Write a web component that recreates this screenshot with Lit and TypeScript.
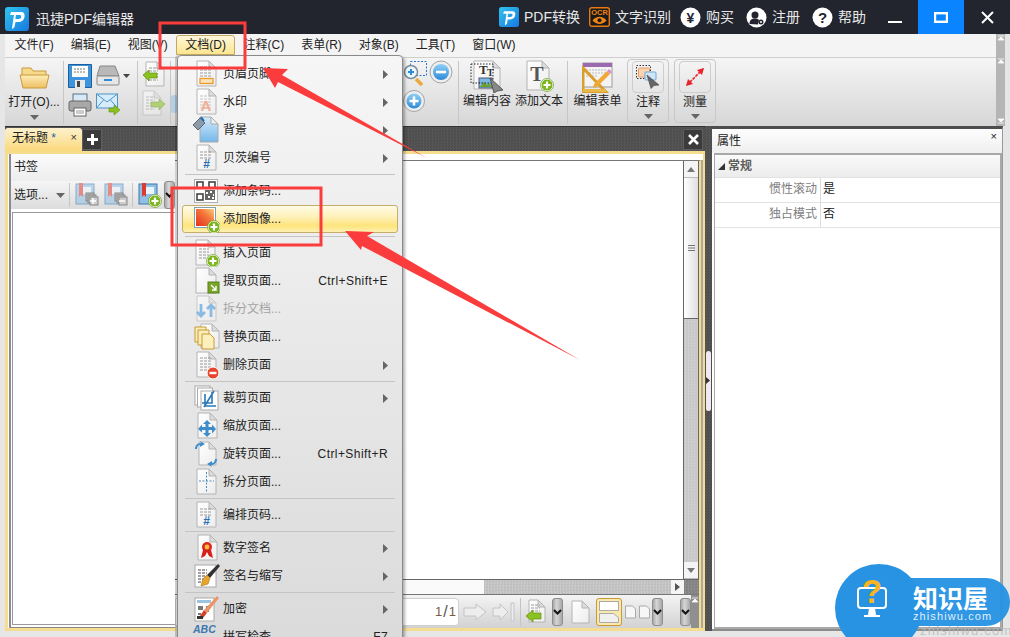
import { LitElement, html, css, svg } from "lit";
import { customElement } from "lit/decorators.js";

const pg = (x = 5, y = 1, w = 19, h = 25) => svg`<path d="M${x} ${y}h${w - 7}l7 7v${h - 7}h${-w}z" fill="url(#pg)" stroke="#b4b4b4"/><path d="M${x + w - 7} ${y}v7h7z" fill="#dcdcdc" stroke="#b4b4b4"/>`;
const lines = (x: number, y: number, n: number, w = 10, c = "#9a9a9a") =>
  Array.from({ length: n }, (_, i) => svg`<path d="M${x} ${y + i * 3}h${w}" stroke="${c}" stroke-dasharray="3 1" fill="none"/>`);
const plus = (cx: number, cy: number, r = 6) => svg`<circle cx="${cx}" cy="${cy}" r="${r}" fill="#7cb51e" stroke="#fff" stroke-width="1"/><circle cx="${cx}" cy="${cy}" r="${r + 0.5}" fill="none" stroke="#6a9c1a" stroke-width=".7"/><path d="M${cx - r + 2.5} ${cy}h${2 * r - 5}M${cx} ${cy - r + 2.5}v${2 * r - 5}" stroke="#fff" stroke-width="2.2"/>`;
const minus = (cx: number, cy: number, r = 6) => svg`<circle cx="${cx}" cy="${cy}" r="${r}" fill="#e8472e" stroke="#fff"/><path d="M${cx - r + 2.5} ${cy}h${2 * r - 5}" stroke="#fff" stroke-width="2.4"/>`;
const hash = (x: number, y: number) => svg`<text x="${x}" y="${y}" font-family="Liberation Sans" font-weight="700" font-size="12" fill="#2a6fb5" text-anchor="middle">#</text>`;
const icon = (c: unknown, w = 28, h = 28) => html`<svg width="${w}" height="${h}" viewBox="0 0 ${w} ${h}">${c}</svg>`;

const ICONS: Record<string, unknown> = {
  header: icon(svg`${pg()}${lines(8, 7, 4, 11)}<rect x="8" y="18.5" width="13" height="5" fill="#fbe3b8" stroke="#ee9a2c" stroke-width="1.3"/>`),
  water: icon(svg`${pg()}${lines(8, 8, 5, 11, "#c4c4c4")}<text x="14" y="23" text-anchor="middle" font-family="Liberation Sans" font-weight="700" font-size="15" fill="#f2ad92">A</text>`),
  bg: icon(svg`<path d="M8 1h11l7 7v18H8z" fill="url(#sky)" stroke="#aaa"/><path d="M19 1v7h7z" fill="#eee" stroke="#aaa"/><path d="M1 9l7-7 5 5-7 7z" fill="#8d9aa8" stroke="#5c6874"/><path d="M9 1l3 4" stroke="#1f6fc0" stroke-width="2"/>`),
  bates: icon(svg`${pg()}${lines(8, 8, 3, 11)}${hash(14.5, 24)}`),
  qr: icon(svg`<rect x="2.5" y="2.5" width="23" height="23" fill="#fff" stroke="#b0b0b0"/><g fill="none" stroke="#444" stroke-width="1.6"><rect x="5" y="5" width="6" height="6"/><rect x="5" y="17" width="6" height="6"/><rect x="17" y="5" width="6" height="6"/></g><path d="M13 13h10v10H13z" fill="#666"/><path d="M14 15h2v2h-2zM18 14h2v2h-2zM21 17h1v2h-1zM16 19h2v2h-2zM20 20h2v2h-2zM13 6h2v2h-2zM13 10h2v1h-2zM6 13h3v2H6z" fill="#fff"/>`),
  image: icon(svg`<rect x="2.5" y="2.5" width="21" height="20" fill="#fff" stroke="#7f9fb5"/><rect x="4" y="4" width="18" height="17" fill="url(#sun)"/>${plus(22, 22, 6)}`),
  insert: icon(svg`${pg(4)}${lines(7, 7, 5, 10)}${plus(21, 22, 6)}`),
  extract: icon(svg`${pg(4, 1, 20, 25)}<rect x="16" y="15" width="11" height="11" fill="#7aa528" stroke="#55801a"/><path d="M19 18l5 5m0-4v4h-4" stroke="#fff" stroke-width="1.4" fill="none"/>`),
  split: icon(svg`<g opacity=".6">${pg()}<path d="M9 9v12m-4-4l4 4 4-4M19 22V10m-4 4l4-4 4 4" stroke="#4f9ade" stroke-width="2.8" fill="none"/></g>`),
  replace: icon(svg`${pg(9, 1, 18, 24)}<path d="M3 4h11v15H3z" fill="#fbedb8" stroke="#c79a35"/><path d="M6 7h11v15H6z" fill="#fbedb8" stroke="#c79a35"/><path d="M10 11h8l4 4v11H10z" fill="#fdf0bd" stroke="#c79a35"/>`),
  del: icon(svg`${pg()}${lines(8, 7, 5, 11)}${minus(21, 22, 6)}`),
  crop: icon(svg`<rect x="3" y="2" width="15" height="19" fill="#fff" stroke="#aaa"/><rect x="5.500" y="4" width="15" height="19" fill="#fff" stroke="#aaa"/><rect x="9" y="7" width="17" height="19" fill="#fff" stroke="#aaa"/><path d="M13 10v12h11M10 19h10V8m2-1L12 23" stroke="#2a78bb" stroke-width="1.6" fill="none"/>`),
  scale: icon(svg`${pg(6)}<path d="M15 8l4 4h-2.500v3H20v-2.500l4 4.500-4 4.500V18h-3.500v3H19l-4 4-4-4h2.500v-3H10v2.500L6 17l4-4.500V15h3.500v-3H11z" fill="#3f8ccb"/>`),
  rotate: icon(svg`${pg(7, 2, 17, 23)}<path d="M3 9c0-4 3-6 6-6l-1-2 5 3-5 3V5c-2 0-3 2-3 4zM25 19c0 4-3 6-6 6l1 2-5-3 5-3v2c2 0 3-2 3-4z" fill="#3f8ccb"/>`),
  splitpage: icon(svg`${pg()}<path d="M14.500 4v21M7 13h15" stroke="#4b88bb" stroke-dasharray="2 1.500" fill="none"/>`),
  number: icon(svg`${pg()}${lines(8, 8, 3, 11)}${hash(14.5, 24)}`),
  sign: icon(svg`${pg(6)}<circle cx="15" cy="13" r="5" fill="#e2261c"/><circle cx="15" cy="13" r="2.4" fill="#f7c243"/><path d="M11 16l-2 8 4-2 2-4 2 4 4 2-2-8z" fill="#d4201a"/>`),
  initials: icon(svg`<rect x="3" y="3" width="21" height="22" fill="#fff" stroke="#aaa"/>${lines(6, 8, 5, 9, "#444")}<path d="M26 2l2 2-10 12-3-3z" fill="#333"/><path d="M15 13l3 3-2 6-7 2 2-7z" fill="#e7a52c" stroke="#a87514" stroke-width=".6"/>`),
  lock: icon(svg`<rect x="3" y="3" width="19" height="23" fill="#fff" stroke="#aaa"/><rect x="5" y="5" width="14" height="3" fill="#9cc3e0"/><path d="M6 11h5v4H6zM6 18h3v2H6zM14 11h5v2h-5zM14 15h3v2h-3z" fill="#777"/><path d="M27 3l-2-2-13 14 3 3z" fill="#ec9468"/><path d="M12 15l-4 6 3 2 4-5z" fill="#d8402a"/><path d="M5 21h6v3H5z" fill="#333"/>`),
  spell: icon(svg`<text x="1" y="10" font-family="Liberation Sans" font-style="italic" font-weight="700" font-size="10.500" fill="#3d78b0">ABC</text><path d="M13 22l4 4 7-8" stroke="#7cb51e" stroke-width="3" fill="none"/>`),
};

type Item = { t: string; i: string; sub?: boolean; key?: string; off?: boolean; on?: boolean } | { sep: true; wide?: boolean };
const MENU: Item[] = [
  { t: "页眉页脚", i: "header", sub: true },
  { t: "水印", i: "water", sub: true },
  { t: "背景", i: "bg", sub: true },
  { t: "贝茨编号", i: "bates", sub: true },
  { sep: true },
  { t: "添加条码...", i: "qr" },
  { t: "添加图像...", i: "image", on: true },
  { sep: true, wide: true },
  { t: "插入页面", i: "insert" },
  { t: "提取页面...", i: "extract", key: "Ctrl+Shift+E" },
  { t: "拆分文档...", i: "split", off: true },
  { t: "替换页面...", i: "replace" },
  { t: "删除页面", i: "del", sub: true },
  { sep: true },
  { t: "裁剪页面", i: "crop", sub: true },
  { t: "缩放页面...", i: "scale" },
  { t: "旋转页面...", i: "rotate", key: "Ctrl+Shift+R" },
  { t: "拆分页面...", i: "splitpage" },
  { sep: true },
  { t: "编排页码...", i: "number" },
  { sep: true },
  { t: "数字签名", i: "sign", sub: true },
  { t: "签名与缩写", i: "initials", sub: true },
  { sep: true },
  { t: "加密", i: "lock", sub: true },
  { t: "拼写检查", i: "spell", key: "F7" },
];

const logo = (s: number) => html`<svg width="${s}" height="${s}" viewBox="0 0 24 24"><rect width="24" height="24" rx="3" fill="url(#logo)"/><path d="M7 21l2-13h-4l1-3h10c3 0 4 2 3.500 5-.5 3-3 5-6 5h-3l-1 5-2 2zM11 8l-.7 4h3.200c1.500 0 2.500-.8 2.700-2 .2-1.300-.4-2-1.700-2z" fill="#fff"/></svg>`;
const caret = html`<svg class="caret" width="9" height="5" viewBox="0 0 9 5"><path d="M0 0h9L4.500 5z" fill="#666"/></svg>`;
const chev = html`<span class="dd"><svg width="9" height="6" viewBox="0 0 9 6"><path d="M1 1l3.500 3.500L8 1" fill="none" stroke="#111" stroke-width="2"/></svg></span>`;
const notch = (up: boolean) => html`<svg width="8" height="6" viewBox="0 0 8 6"><path d="${up ? "M1 5h6L4 2zM1 1h6" : "M1 1h6L4 4zM1 5h6"}" fill="#fff" stroke="#fff" stroke-width=".8"/></svg>`;
const book = (badge: unknown, dim = false) => html`<svg width="24" height="26" viewBox="0 0 24 26"><g opacity="${dim ? 0.55 : 1}"><rect x="1" y="2" width="18" height="20" fill="#8fbfe5" stroke="#3f79ad"/><rect x="7" y="5" width="9" height="7" fill="#eaf4fb"/><path d="M4 1h4v14l-2-2-2 2z" fill="#dc3c30"/></g>${badge}</svg>`;
const stack = (mark: string) => svg`<g stroke="#888" fill="#bbb"><rect x="11" y="11" width="8" height="8"/><rect x="13" y="13" width="8" height="8"/><rect x="15" y="15" width="8" height="8" fill="#ccc"/></g><path d="${mark}" stroke="#fff" stroke-width="1.500"/>`;

@customElement("app-root")
export class AppRoot extends LitElement {
  static styles = css`
    :host { display: block; width: 1010px; height: 637px; position: relative; overflow: hidden; background: #e6e6e6;
      font: 12px/1.2 "Liberation Sans", "Noto Sans CJK SC", sans-serif; color: #222; }
    svg { display: block; flex: none; }
    .defs { width: 0; height: 0; }
    .title { height: 34px; background: #22252e; display: flex; align-items: center; color: #e8e8e8; font-size: 14px; padding: 4px 0 0 5px; box-sizing: border-box; }
    .title .name { margin-left: 7px; }
    .links { margin-left: auto; display: grid; grid-template-columns: 90px 91px 66px 66px 54px; align-items: center; margin-top: -4px; margin-right: 6px; }
    .link { display: flex; align-items: center; gap: 5px; white-space: nowrap; }
    .win { display: flex; height: 34px; margin-top: -4px; }
    .win span { width: 46px; display: flex; align-items: center; justify-content: center; }
    .win .max { background: #0a84ff; }
    .ribbon { display: flex; padding: 0 5px; height: 92px; }
    .ribbon-main { flex: 1; display: flex; flex-direction: column; min-width: 0; }
    .strip { width: 9px; background: #b5b5b5; display: flex; flex-direction: column; justify-content: space-between; align-items: center; padding: 1px 0 2px; box-sizing: border-box; }
    .strip .mid { margin-top: -38px; }
    .menubar { height: 24px; display: flex; align-items: center; padding: 0 0 1px 1px; box-sizing: border-box; background: #f4f4f4; border-bottom: 1px solid #cfcfcf; }
    .mi { padding: 2px 8.500px; white-space: nowrap; border: 1px solid transparent; border-width: 1px 0; }
    .mi.open { background: linear-gradient(#fff8dc, #fce58f); border: 1px solid #c4a860; border-radius: 3px 3px 0 0; padding: 2px 8px; }
    .toolbar { height: 68px; display: flex; background: linear-gradient(#f5f5f5, #d6d6d6); }
    .tsep { width: 1px; background: #c6c6c6; margin: 3px 0 2px; flex: none; }
    .open-btn { width: 58px; display: flex; flex-direction: column; align-items: center; }
    .open-btn svg:first-child { margin-top: 6px; }
    .open-btn span { margin-top: 6px; }
    .open-btn .caret, .big .caret, .tool .caret { margin-top: 6px; }
    .g2 { width: 73px; display: grid; grid-template-columns: 28px 36px; grid-auto-rows: 29px; padding: 3px 0 0 4px; box-sizing: border-box; }
    .g2 div { display: flex; align-items: center; gap: 3px; }
    .g3 { width: 32px; padding: 3px 0 0 4px; box-sizing: border-box; display: grid; grid-auto-rows: 29px; }
    .g4 { width: 287px; display: flex; justify-content: space-between; align-items: flex-start; }
    .blob { margin-top: 35px; }
    .tool { display: flex; flex-direction: column; align-items: center; width: 52px; }
    .tool .ic { height: 35px; display: flex; align-items: flex-end; }
    .tool span { padding-top: 1px; white-space: nowrap; }
    .g5 { width: 108px; display: flex; padding: 0 0 0 2px; box-sizing: border-box; }
    .g6 { width: 59px; display: flex; justify-content: center; }
    .big { width: 42px; height: 64px; margin-top: 1px; border: 1px solid #c8c8c8; border-radius: 4px; box-sizing: border-box; display: flex; flex-direction: column; align-items: center; }
    .big.second { margin-left: 5px; }
    .big .box { width: 32px; height: 32px; margin-top: 1px; border: 1px solid #cdcdcd; border-radius: 4px; box-sizing: border-box; display: flex; align-items: center; justify-content: center; }
    .big span { margin-top: 2px; }
    .big .caret { margin-top: 5px; }
    .work { height: 511px; display: flex; padding: 0 5px 6px; box-sizing: border-box; }
    .main { width: 700px; display: flex; flex-direction: column; }
    .tex { background: repeating-conic-gradient(#565656 0 25%, #4c4c4c 0 50%) 0 0 / 3px 3px; }
    .tabs { height: 25px; display: flex; align-items: flex-end; border-top: 1px solid #333; box-sizing: border-box; }
    .tab { width: 77px; height: 23px; background: linear-gradient(#fdf1cd, #fbd97c); border-radius: 3px 3px 0 0; display: flex; justify-content: space-between; padding: 3px 5px 0 7px; box-sizing: border-box; }
    .tab .star { color: #2a5ea8; }
    .tab .x { font-size: 11px; color: #333; }
    .tbtn { width: 20px; height: 21px; background: #3b3b3b; display: flex; align-items: center; justify-content: center; margin-bottom: 1px; border: 1px solid #5e5e5e; box-sizing: border-box; }
    .tbtn.end { margin-left: auto; margin-right: 2px; }
    .frame { flex: 1; display: flex; min-height: 0; border: solid #f5dc8f; border-width: 3px 2px 3px 3px; background: #fff; }
    .left { width: 166px; margin-left: 1px; border: solid #8a8a8a; border-width: 0 0 1px 2px; display: flex; flex-direction: column; flex: none; box-sizing: border-box; }
    .lhead { height: 27px; display: flex; align-items: center; padding: 0 0 0 3px; background: linear-gradient(#fbfbfb, #ededed); }
    .ltool { height: 28px; display: flex; align-items: center; padding-left: 3px; background: linear-gradient(#f5f5f5, #dcdcdc); flex: none; white-space: nowrap; }
    .ltool .caret { margin-left: 8px; }
    .ltool .tsep { height: 24px; margin: 0 5px 0 4px; }
    .ltool svg + svg { margin-left: 5px; }
    .ltool .dd { margin-left: 2px; }
    .dd { width: 11px; height: 28px; border: 1px solid #8d8d8d; border-radius: 3px; background: linear-gradient(90deg, #a8a8a8, #d6d6d6 40%, #a8a8a8); display: flex; align-items: center; justify-content: center; box-sizing: border-box; flex: none; }
    .lbody { flex: 1; margin: 3px 0 2px 1px; border: 1px solid #999; border-right: 0; background: #fff; }
    .doc { flex: 1; min-width: 0; margin-top: 6px; border-top: 1px solid #777; border-right: 2px solid #f5dc8f; display: flex; flex-direction: column; box-shadow: 2px 0 0 #a8a8a8; margin-right: 2px; }
    .docmain { flex: 1; display: flex; min-height: 0; }
    .canvas { flex: 1; background: #fff; border-right: 1px solid #666; }
    .vs { width: 14px; border-right: 1px solid #666; display: flex; flex-direction: column; background: #c9c9c9; }
    .vs .btn { height: 16px; background: #f4f4f4; display: flex; align-items: center; justify-content: center; flex: none; border-bottom: 1px solid #bbb; }
    .vs .thumb { height: 140px; background: linear-gradient(90deg, #fff, #dedede); border-bottom: 1px solid #666; display: flex; align-items: center; justify-content: center; flex: none; }
    .vs .fill { flex: 1; background: repeating-conic-gradient(#cfcfcf 0 25%, #c5c5c5 0 50%) 0 0 / 3px 3px; }
    .hs { height: 14px; display: flex; border-top: 1px solid #666; border-bottom: 1px solid #777; }
    .hs .thumb { width: 309px; background: #fafafa; flex: none; }
    .hs .fill { flex: 1; background: repeating-conic-gradient(#c9c9c9 0 25%, #bdbdbd 0 50%) 0 0 / 3px 3px; }
    .hs .arrow { width: 13px; background: #f5f5f5; display: flex; align-items: center; justify-content: center; }
    .hs .tail { width: 15px; background: repeating-conic-gradient(#8d8d8d 0 25%, #7f7f7f 0 50%) 0 0 / 3px 3px; }
    .nav { height: 33px; display: flex; align-items: center; background: linear-gradient(#f4f4f4, #d2d2d2); flex: none; }
    .field { flex: 1; height: 28px; background: #fff; border: 1px solid #cfcfcf; border-radius: 0 4px 4px 0; box-sizing: border-box; display: flex; align-items: center; justify-content: flex-end; padding-right: 2px; font-size: 13px; color: #7a5a46; }
    .field b { font-weight: 400; color: #555; font-size: 16px; margin: 0 1px; }
    .m2 { margin-left: 2px; } .m3 { margin-left: 3px; } .m4 { margin-left: 4px; } .m5 { margin-left: 5px; } .m6 { margin-left: 6px; } .m8 { margin-left: 8px; } .m17 { margin-left: 17px; }
    .nsep { width: 1px; height: 28px; background: #c4c4c4; }
    .hl { width: 26px; height: 28px; border: 1px solid #c79a35; border-radius: 3px; background: #fbe8ac; box-sizing: border-box; display: flex; align-items: center; justify-content: center; }
    .graybar { width: 8px; align-self: stretch; background: #8f8f8f; display: flex; justify-content: center; padding-top: 2px; box-sizing: border-box; }
    .split { width: 7px; display: flex; align-items: center; justify-content: center; padding-top: 4px; box-sizing: border-box; }
    .handle { width: 5px; height: 60px; background: #eeeaf0; border-radius: 3px; display: flex; align-items: center; }
    .props-wrap { width: 291px; border-top: 3px solid #4d4d4d; display: flex; flex-direction: column; background: #fff; border-right: 1px solid #999; border-bottom: 2px solid #8c8c8c; box-sizing: border-box; box-shadow: 2px 0 0 #e6e6e6; }
    .phead { height: 24px; flex: none; display: flex; justify-content: space-between; align-items: center; padding: 0 5px; background: linear-gradient(#fdfdfd, #efefef); }
    .phead .x { font-size: 11px; margin-top: -8px; }
    .ptable { flex: 1; margin: 0 0 0 2px; border: 1px solid #a8a8a8; border-width: 2px 2px 2px 1px; }
    .pgroup { height: 22px; display: flex; align-items: center; gap: 3px; padding-left: 3px; background: linear-gradient(#fafafa, #ececec); color: #5e5e5e; font-weight: 700; border-bottom: 1px solid #e2e2e2; }
    .prow { height: 25px; display: flex; border-bottom: 1px solid #e2e2e2; box-sizing: border-box; align-items: stretch; }
    .prow .k { width: 106px; text-align: right; padding: 4px 3px 0 0; box-sizing: border-box; color: #7d7d7d; border-right: 1px solid #dcdcdc; }
    .prow .v { padding: 4px 0 0 2px; }
    .menu { position: absolute; left: 177px; top: 55px; width: 226px; height: 600px; box-sizing: border-box; padding: 4px 4px; border: 1px solid #8a8a8a; border-radius: 4px; background: linear-gradient(#f6f6f6, #dadada); box-shadow: -2px 0 0 rgba(0, 0, 0, .18), 2px 2px 3px rgba(0, 0, 0, .3); }
    .row { height: 28px; display: flex; align-items: center; box-sizing: border-box; border: 1px solid transparent; border-radius: 3px; padding-right: 9px; }
    .row .ic { width: 28px; margin-left: 9px; flex: none; }
    .row .t { margin-left: 3px; flex: 1; white-space: nowrap; }
    .row .key { letter-spacing: .42px; }
    .row.on { background: linear-gradient(#fffbe6, #fff0b4 45%, #fde47c 75%, #fff0b0); border-color: #c6ad6c; }
    .row.off .t { color: #a4a4a4; }
    .sep { height: 5px; display: flex; align-items: center; padding: 0 3px; }
    .sep.wide { height: 6px; }
    .sep i { display: block; height: 1px; flex: 1; background: #c4c4c4; }
    .marks { position: absolute; inset: 0; pointer-events: none; }
    .badge { position: absolute; left: 835px; top: 564px; width: 175px; height: 73px; color: #fff; }
    .badge .pill { position: absolute; left: 30px; top: 14px; right: 0; height: 48px; background: #2893e3; border-radius: 0 24px 24px 0; opacity: .96; }
    .badge .disc { position: absolute; left: 0; top: 0; width: 88px; height: 88px; border-radius: 50%; background: #2893e3; }
    .badge .disc svg { margin: 11px 0 0 20px; }
    .badge .zh { position: absolute; left: 78px; top: 21px; font: 700 25px/24px "Noto Sans CJK SC", sans-serif; white-space: nowrap; }
    .badge .en { position: absolute; left: 78px; top: 46px; font: 11px/13px "Liberation Sans", sans-serif; letter-spacing: 1.1px; opacity: .85; white-space: nowrap; }
    .ghost { position: absolute; left: 920px; top: 624px; font: 13px/13px "Liberation Sans", sans-serif; letter-spacing: 1.200px; color: #b8b8b8; white-space: nowrap; opacity: .8; }
  `;

  render() {
    return html`
      <svg class="defs"><defs>
        <linearGradient id="pg" x1="0" y1="0" x2="1" y2="1"><stop offset="0" stop-color="#fff"/><stop offset="1" stop-color="#ededed"/></linearGradient>
        <linearGradient id="sky" x1="0" y1="0" x2="0" y2="1"><stop offset="0" stop-color="#d5ebfb"/><stop offset="1" stop-color="#74b7ea"/></linearGradient>
        <linearGradient id="sun" x1="0" y1="1" x2="1" y2="0"><stop offset="0" stop-color="#e5301f"/><stop offset=".6" stop-color="#f4793a"/><stop offset="1" stop-color="#fbd07c"/></linearGradient>
        <linearGradient id="logo" x1="0" y1="0" x2="1" y2="1"><stop offset="0" stop-color="#30c4ee"/><stop offset="1" stop-color="#1778e0"/></linearGradient>
        <linearGradient id="folder" x1="0" y1="0" x2="0" y2="1"><stop offset="0" stop-color="#fdeeb8"/><stop offset="1" stop-color="#eebf62"/></linearGradient>
        <linearGradient id="ball" x1="0" y1="0" x2="0" y2="1"><stop offset="0" stop-color="#8fd0f5"/><stop offset="1" stop-color="#2d8ad6"/></linearGradient>
      </defs></svg>
      <div class="title">
        ${logo(24)}<span class="name">迅捷PDF编辑器</span>
        <div class="links">
          <div class="link">${logo(20)}<span>PDF转换</span></div>
          <div class="link"><svg width="21" height="20" viewBox="0 0 21 20"><rect x=".7" y=".7" width="19.600" height="18.600" rx="2" fill="#1a1a1a" stroke="#e8780f" stroke-width="1.400"/><text x="10.500" y="8" font-family="Liberation Sans" font-weight="700" font-size="7.500" text-anchor="middle" fill="#ee8416">OCR</text><path d="M3.500 13.500c4-5 10-5 14 0-4 4.500-10 4.500-14 0z" fill="#ee8416"/><circle cx="10.500" cy="13.300" r="2" fill="#1a1a1a"/></svg><span>文字识别</span></div>
          <div class="link"><svg width="21" height="21" viewBox="0 0 21 21"><circle cx="10.500" cy="10.500" r="10" fill="#fff"/><text x="10.500" y="15.500" font-family="Liberation Sans" font-weight="700" font-size="14" text-anchor="middle" fill="#22252e">¥</text></svg><span>购买</span></div>
          <div class="link"><svg width="21" height="21" viewBox="0 0 21 21"><circle cx="10.500" cy="10.500" r="10" fill="#fff"/><circle cx="9" cy="8" r="3.500" fill="#22252e"/><path d="M3.500 17c0-4 2-5.500 5.500-5.500 2 0 3 .5 4 1.500l-1 4.500z" fill="#22252e"/><circle cx="15" cy="15" r="2.500" fill="#22252e"/><circle cx="15" cy="15" r="1" fill="#fff"/></svg><span>注册</span></div>
          <div class="link"><svg width="21" height="21" viewBox="0 0 21 21"><circle cx="10.500" cy="10.500" r="10" fill="#fff"/><text x="10.500" y="16" font-family="Liberation Sans" font-weight="700" font-size="15" text-anchor="middle" fill="#22252e">?</text></svg><span>帮助</span></div>
        </div>
        <div class="win">
          <span><svg width="14" height="12" viewBox="0 0 14 12"><path d="M0 11h14" stroke="#fff" stroke-width="2"/></svg></span>
          <span class="max"><svg width="14" height="11" viewBox="0 0 14 11"><rect x="1" y="1.200" width="12" height="8.600" fill="none" stroke="#fff" stroke-width="2.400"/></svg></span>
          <span><svg width="13" height="13" viewBox="0 0 13 13"><path d="M1 1l11 11M12 1L1 12" stroke="#fff" stroke-width="2"/></svg></span>
        </div>
      </div>

      <div class="ribbon">
        <div class="ribbon-main">
          <div class="menubar">
            ${["文件(F)", "编辑(E)", "视图(V)"].map((m) => html`<span class="mi">${m}</span>`)}
            <span class="mi open">文档(D)</span>
            ${["注释(C)", "表单(R)", "对象(B)", "工具(T)", "窗口(W)"].map((m) => html`<span class="mi">${m}</span>`)}
          </div>
          <div class="toolbar">
            <div class="open-btn">
              <svg width="31" height="25" viewBox="0 0 31 25"><path d="M3 4h9l2 3h13v5H3z" fill="#f6d98a" stroke="#c99a3c"/><path d="M1 11h29l-3 13H4z" fill="url(#folder)" stroke="#c99a3c"/></svg>
              <span>打开(O)...</span>${caret}
            </div>
            <div class="tsep"></div>
            <div class="g2">
              <div><svg width="24" height="24" viewBox="0 0 24 24"><path d="M.5.500h23v23H.5z" fill="#3d93dc" stroke="#1d5f9c"/><rect x="4" y="2" width="16" height="11" fill="#fff"/><path d="M6 5h12M6 8h12" stroke="#777" stroke-dasharray="2 1"/><rect x="7" y="16" width="10" height="8" fill="#e8e8e8"/><rect x="9" y="17" width="3" height="6" fill="#444"/></svg></div>
              <div><svg width="24" height="22" viewBox="0 0 24 22"><path d="M4 1h15l4 10H1z" fill="#b9b9b9" stroke="#888"/><rect x="1" y="11" width="22" height="9" rx="1" fill="#e6e6e6" stroke="#888"/><rect x="8" y="14" width="8" height="2" fill="#2f8be0"/></svg><svg width="7" height="4" viewBox="0 0 7 4"><path d="M0 0h7L3.500 4z" fill="#444"/></svg></div>
              <div><svg width="24" height="24" viewBox="0 0 24 24"><rect x="5" y="1" width="14" height="9" fill="#d8e9f5" stroke="#55738a"/><rect x="1" y="8" width="22" height="10" rx="2" fill="#a8a8a8" stroke="#666"/><rect x="6" y="15" width="12" height="8" fill="#fff" stroke="#666"/><path d="M8 18h8M8 20h8" stroke="#999"/></svg></div>
              <div><svg width="24" height="23" viewBox="0 0 24 23"><rect x=".5" y="1" width="21" height="14" fill="#d6ecfa" stroke="#4f93c6"/><path d="M.5 1l10.500 8 10.500-8M.5 15l7-8M21.500 15l-7-8" fill="none" stroke="#4f93c6"/><path d="M13 15h5v-3l6 5-6 5v-3h-5z" fill="#8cc21f" stroke="#5e8c10" stroke-width=".6"/></svg></div>
            </div>
            <div class="tsep"></div>
            <div class="g3">
              <svg width="24" height="26" viewBox="0 0 24 26">${pg(4, 1, 18, 24)}${lines(7, 7, 5, 9)}<path d="M1 14l6-5v3h8v5H7v3z" fill="#8cc21f" stroke="#5e8c10" stroke-width=".7"/></svg>
              <svg width="24" height="26" viewBox="0 0 24 26"><g opacity=".55">${pg(1, 1, 18, 24)}${lines(4, 7, 5, 9)}<path d="M23 14l-6-5v3H9v5h8v3z" fill="#8cc21f" stroke="#5e8c10" stroke-width=".7"/></g></svg>
            </div>
            <div class="tsep"></div>
            <div class="g4">
              <svg class="blob" width="10" height="22" viewBox="0 0 10 22"><circle cx="4" cy="11" r="9" fill="#b4cfe4"/></svg>
              <svg width="55" height="68" viewBox="0 0 55 68">
                <rect x="7.500" y="3.500" width="16" height="14" fill="none" stroke="#2a78c8" stroke-dasharray="2 1.500"/>
                <path d="M13 21l6 6" stroke="#e9a93d" stroke-width="3.500"/>
                <circle cx="8" cy="14" r="6.500" fill="#eaf5fc" stroke="#7c8d98" stroke-width="1.500"/>
                <path d="M5 14h6M8 11v6" stroke="#2d8ad6" stroke-width="2"/>
                <circle cx="38" cy="14" r="11" fill="#eee" stroke="#a4a4a4"/><circle cx="38" cy="14" r="8" fill="url(#ball)"/><path d="M33 14h10" stroke="#fff" stroke-width="2.600"/>
                <circle cx="11" cy="43" r="10.500" fill="#eee" stroke="#a4a4a4"/><circle cx="11" cy="43" r="7.500" fill="url(#ball)"/><path d="M6.500 43h9M11 38.500v9" stroke="#fff" stroke-width="2.600"/>
              </svg>
            </div>
            <div class="tsep"></div>
            <div class="g5">
              <div class="tool"><div class="ic"><svg width="35" height="33" viewBox="0 0 35 33">${pg(4, 1, 26, 28)}<text x="9" y="14" font-family="Liberation Serif" font-weight="700" font-size="13" fill="#333">T</text><text x="17" y="16" font-family="Liberation Serif" font-weight="700" font-size="10" fill="#333">T</text><rect x="9" y="18" width="13" height="10" fill="#7bb7e0" stroke="#557"/><path d="M10 27l4-5 3 3 2-2 3 4z" fill="#6ba32a"/><rect x="1" y="4" width="22" height="19" fill="none" stroke="#222" stroke-dasharray="1.500 1.500"/><path d="M20 18l13 12-6 1-3 2z" fill="#888" stroke="#555"/></svg></div><span>编辑内容</span></div>
              <div class="tool"><div class="ic"><svg width="30" height="33" viewBox="0 0 30 33">${pg(3, 1, 22, 29)}<text x="13" y="21" font-family="Liberation Serif" font-weight="700" font-size="20" text-anchor="middle" fill="#555">T</text>${plus(23, 25, 6)}</svg></div><span>添加文本</span></div>
            </div>
            <div class="tsep"></div>
            <div class="g6"><div class="tool"><div class="ic"><svg width="31" height="31" viewBox="0 0 31 31"><rect x="1" y="1" width="29" height="24" fill="#f4f4f4" stroke="#999"/><rect x="1" y="1" width="29" height="4" fill="#9b6bb0"/><path d="M4 8h20M4 11h20M4 14h12" stroke="#bbb" stroke-dasharray="2 1"/><path d="M1 6v24h23z" fill="none" stroke="#d99f2e" stroke-width="3"/><path d="M1 27h23v3H1z" fill="#e9b84a"/><path d="M12 22l13-13 3 3-13 13-4 1z" fill="#f0a935"/><path d="M25 9l2-2 3 3-2 2z" fill="#d58fc5"/></svg></div><span>编辑表单</span></div></div>
            <div class="big">
              <div class="box"><svg width="24" height="24" viewBox="0 0 24 24"><rect x=".5" y=".5" width="14" height="13" fill="none" stroke="#333" stroke-dasharray="1.500 1.500"/><rect x="2.500" y="3" width="11" height="9" rx="1" fill="#fbd3b0" stroke="#e89a66"/><rect x="9" y="7" width="11" height="8" rx="1" fill="#cfe6f7" stroke="#6fa7d4"/><path d="M11 10l12 10-5 .5-3 3z" fill="#666" stroke="#444" stroke-width=".6"/></svg></div>
              <span>注释</span>${caret}
            </div>
            <div class="big second">
              <div class="box"><svg width="20" height="20" viewBox="0 0 20 20"><path d="M2 18L18 2" stroke="#e8232a" stroke-width="1.600" stroke-dasharray="3 1"/><path d="M1 19l2-7 5 5zM19 1l-7 2 5 5z" fill="#e8232a"/></svg></div>
              <span>测量</span>${caret}
            </div>
          </div>
        </div>
        <div class="strip">${notch(true)}<span class="mid">${notch(true)}</span>${notch(false)}</div>
      </div>

      <div class="work">
        <div class="main">
          <div class="tabs tex">
            <div class="tab"><span>无标题 <span class="star">*</span></span><span class="x">×</span></div>
            <div class="tbtn"><svg width="11" height="11" viewBox="0 0 11 11"><path d="M0 5.500h11M5.500 0v11" stroke="#fff" stroke-width="3"/></svg></div>
            <div class="tbtn end"><svg width="11" height="11" viewBox="0 0 11 11"><path d="M1 1l9 9M10 1l-9 9" stroke="#fff" stroke-width="2.600"/></svg></div>
          </div>
          <div class="frame">
            <div class="left">
              <div class="lhead">书签</div>
              <div class="ltool">
                <span>选项...</span>${caret}<div class="tsep"></div>
                ${book(svg`${stack("M15 19h6M18 16v6")}`, true)}
                ${book(svg`${stack("M15 19h6")}`, true)}
                <div class="tsep"></div>
                ${book(plus(17, 19, 6))}
                ${chev}
              </div>
              <div class="lbody"></div>
            </div>
            <div class="doc">
              <div class="docmain">
                <div class="canvas"></div>
                <div class="vs">
                  <div class="btn"><svg width="8" height="5" viewBox="0 0 8 5"><path d="M0 5h8L4 0z" fill="#777"/></svg></div>
                  <div class="thumb"><svg width="7" height="6" viewBox="0 0 7 6"><path d="M0 .5h7M0 3h7M0 5.500h7" stroke="#777"/></svg></div>
                  <div class="fill"></div>
                  <div class="btn"><svg width="8" height="5" viewBox="0 0 8 5"><path d="M0 0h8L4 5z" fill="#777"/></svg></div>
                </div>
              </div>
              <div class="hs">
                <div class="thumb"></div><div class="fill"></div>
                <div class="arrow"><svg width="5" height="8" viewBox="0 0 5 8"><path d="M0 0v8l5-4z" fill="#555"/></svg></div>
                <div class="tail"></div>
              </div>
              <div class="nav">
                <div class="field"><span>1</span><b>/</b><span>1</span></div>
                <svg class="m4" width="24" height="18" viewBox="0 0 24 18"><path d="M1 5h12V1l10 8-10 8v-4H1z" fill="#ededed" stroke="#c4c4c4"/></svg>
                <svg class="m5" width="23" height="20" viewBox="0 0 23 20"><path d="M1 6h7V2l8 8-8 8v-4H1zM19 1h3v18h-3z" fill="#ededed" stroke="#c4c4c4"/></svg>
                <div class="nsep m5"></div>
                <svg class="m5" width="20" height="26" viewBox="0 0 20 26">${pg(3, 1, 16, 22)}${lines(5, 6, 4, 9)}<path d="M0 17l7-6v3h8v6H7v3z" fill="#8cc21f" stroke="#5e8c10" stroke-width=".7"/></svg>
                <div class="m6">${chev}</div>
                <svg class="m8" width="19" height="24" viewBox="0 0 19 24">${pg(1, 1, 17, 22)}</svg>
                <div class="hl m6"><svg width="20" height="22" viewBox="0 0 20 22"><rect x=".5" y=".5" width="19" height="9" fill="#fff" stroke="#aaa"/><path d="M.5 12.500h14l5 4v5H.5z" fill="#f0f0f0" stroke="#aaa"/></svg></div>
                <svg class="m3" width="25" height="14" viewBox="0 0 25 14"><path d="M.5 1h7l3 3v9H.5zM14.500 1h7l3 3v9h-10z" fill="#f7f7f7" stroke="#aaa"/></svg>
                <div class="m2">${chev}</div>
                <div class="m17">${chev}</div>
                <div class="graybar">${notch(true)}</div>
              </div>
            </div>
          </div>
        </div>
        <div class="split tex"><div class="handle"><svg width="4" height="7" viewBox="0 0 4 7"><path d="M0 0v7l4-3.500z" fill="#333"/></svg></div></div>
        <div class="props-wrap">
          <div class="phead"><span>属性</span><span class="x">×</span></div>
          <div class="ptable">
            <div class="pgroup"><svg width="7" height="7" viewBox="0 0 7 7"><path d="M7 0v7H0z" fill="#333"/></svg>常规</div>
            <div class="prow"><div class="k">惯性滚动</div><div class="v">是</div></div>
            <div class="prow"><div class="k">独占模式</div><div class="v">否</div></div>
          </div>
        </div>
      </div>

      <div class="menu">
        ${MENU.map((m) => "sep" in m
          ? html`<div class="sep ${m.wide ? "wide" : ""}"><i></i></div>`
          : html`<div class="row ${m.on ? "on" : ""} ${m.off ? "off" : ""}">
              <span class="ic">${ICONS[m.i]}</span><span class="t">${m.t}</span>
              ${m.key ? html`<span class="key">${m.key}</span>` : ""}
              ${m.sub ? html`<svg width="5" height="9" viewBox="0 0 5 9"><path d="M0 0v9l5-4.500z" fill="#666"/></svg>` : ""}
            </div>`)}
      </div>

      <svg class="marks" width="1010" height="637" viewBox="0 0 1010 637">
        <rect x="160" y="23" width="85" height="45" fill="none" stroke="#fb3c3c" stroke-width="3"/>
        <rect x="172" y="188" width="149" height="57" fill="none" stroke="#fb3c3c" stroke-width="3"/>
        <path d="M263 68L288 69 282 75 427 158 278 82 275 88z" fill="#fb3c3c"/>
        <path d="M345 231L374 232 367 236 580 360 362 246 361 250z" fill="#fb3c3c"/>
      </svg>

      <div class="ghost">zhishiwu.com</div>
      <div class="badge">
        <div class="pill"></div>
        <div class="disc"><svg width="48" height="58" viewBox="0 0 48 58"><rect x="3" y="13" width="28" height="20" rx="3" fill="none" stroke="#fff" stroke-width="2"/><path d="M15 33h4l1 6h-6zM9 41h16" fill="#fff" stroke="#fff" stroke-width="1.800"/><text x="17" y="28" font-family="Liberation Sans" font-weight="700" font-size="33" text-anchor="middle" fill="#f9b41f">?</text></svg></div>
        <div class="zh">知识屋</div>
        <div class="en">zhishiwu.com</div>
      </div>
    `;
  }
}
